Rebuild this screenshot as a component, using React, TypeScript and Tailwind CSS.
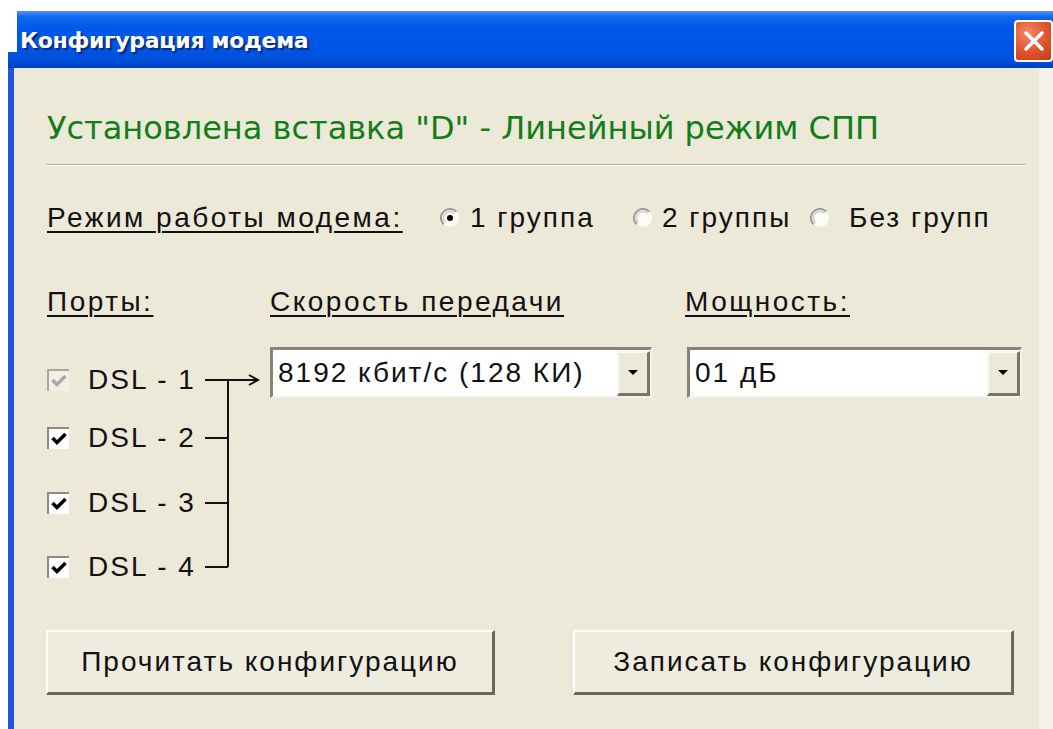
import React from 'react';

const sans = "font-['Liberation_Sans',Arial,sans-serif] text-[28px] tracking-[2px] text-[#111] leading-none";
const caption = "font-['Liberation_Sans',Arial,sans-serif] text-[28px] tracking-[2.5px] text-[#111] leading-none underline underline-offset-[4px] decoration-[2px]";

function Radio({ checked }: { checked?: boolean }) {
  return (
    <svg width="20" height="20" viewBox="0 0 20 20" className="shrink-0">
      <circle cx="10" cy="10" r="9" fill="#fbfbf8" />
      <path d="M3.6 16.4 A9 9 0 0 1 16.4 3.6" fill="none" stroke="#9d9b90" strokeWidth="2" />
      <path d="M5.4 14.6 A6.5 6.5 0 0 1 14.6 5.4" fill="none" stroke="#d4d1c4" strokeWidth="1.5" />
      {checked && <circle cx="10" cy="10" r="3" fill="#000" />}
    </svg>
  );
}

function Checkbox({ disabled }: { disabled?: boolean }) {
  return (
    <div
      className={
        disabled
          ? 'w-[22px] h-[22px] shrink-0 border-t-2 border-l-2 border-t-[#a8a699] border-l-[#a8a699] bg-[#f1efe6] flex items-center justify-center'
          : 'w-[22px] h-[22px] shrink-0 border-t-2 border-l-2 border-t-[#8c8a80] border-l-[#8c8a80] bg-white flex items-center justify-center'
      }
    >
      <svg width="16" height="14" viewBox="0 0 16 14">
        <path d="M1.5 6 L6 10.5 L14.5 2" fill="none" stroke={disabled ? '#a9a9a9' : '#000'} strokeWidth="3.5" />
      </svg>
    </div>
  );
}

function Combo({ value, className }: { value: string; className: string }) {
  return (
    <div className={`${className} h-[51px] bg-white border-t-[3px] border-l-[3px] border-t-[#85837a] border-l-[#85837a] border-b-2 border-r-2 border-b-[#f3f1e9] border-r-[#f3f1e9] flex items-center`}>
      <span className={`${sans} pl-[5px] flex-1 whitespace-nowrap`}>{value}</span>
      <div className="w-[33px] h-[45px] bg-[#ece9d8] border-t-2 border-l-2 border-t-[#fbfaf5] border-l-[#fbfaf5] border-b-[3px] border-r-[3px] border-b-[#77756c] border-r-[#77756c] flex items-center justify-center">
        <svg width="12" height="7" viewBox="0 0 12 7">
          <path d="M1 1 H11 L6 6 Z" fill="#000" />
        </svg>
      </div>
    </div>
  );
}

function Button({ label, className }: { label: string; className: string }) {
  return (
    <button className={`${className} h-[65px] bg-[#eeebdf] border-t-2 border-l-2 border-t-white border-l-white border-b-[3px] border-r-[3px] border-b-[#6a685f] border-r-[#6a685f] flex items-center justify-center`}>
      <span className={sans}>{label}</span>
    </button>
  );
}

const ports = [
  { name: 'DSL - 1', disabled: true, gap: '' },
  { name: 'DSL - 2', disabled: false, gap: 'mt-[18px]' },
  { name: 'DSL - 3', disabled: false, gap: 'mt-[25px]' },
  { name: 'DSL - 4', disabled: false, gap: 'mt-[24px]' },
];

export default function App() {
  return (
    <div className="w-[1053px] h-[729px] bg-white overflow-hidden pt-[11px] pl-[8px]">
      <div className="relative w-[1045px] h-[718px] flex flex-col">
        {/* title bar */}
        <div className="h-[57px] shrink-0 flex items-start bg-[linear-gradient(to_bottom,#4d96f8_0%,#1366f0_10%,#0058ea_30%,#0054e3_70%,#004fd8_88%,#0040bf_100%)]">
          <span className="ml-[12px] mt-[19px] font-['DejaVu_Sans',Verdana,sans-serif] font-bold text-[22px] tracking-[-0.3px] text-white leading-none [text-shadow:2px_2px_1px_#0a2a80]">
            Конфигурация модема
          </span>
          <div className="ml-auto mt-[9px] w-[39px] h-[42px] rounded-[4px] border-2 border-white bg-[radial-gradient(circle_at_35%_30%,#f08a6a_0%,#e0532c_55%,#c23d1a_100%)] flex items-center justify-center">
            <svg width="22" height="22" viewBox="0 0 22 22">
              <path d="M3 3 L19 19 M19 3 L3 19" stroke="#fff" strokeWidth="3.5" strokeLinecap="round" />
            </svg>
          </div>
        </div>
        <div className="absolute left-0 top-0 w-[9px] h-[41px] bg-white" />

        {/* dialog body */}
        <div className="flex-1 flex border-l-[6px] border-l-[#1d55e0]">
          <div className="flex-1 bg-[#ece9d8] pl-[33px] pt-[42px] flex flex-col">
            <div className="h-[36px] flex items-center font-['DejaVu_Sans',Verdana,sans-serif] text-[32px] text-[#137d17] whitespace-nowrap">
              Установлена вставка "D" - Линейный режим СПП
            </div>

            <div className="mt-[18px] w-[978px] h-[2px] border-t border-t-[#aca899] border-b border-b-white" />

            {/* modem mode */}
            <div className="mt-[37px] h-[30px] flex items-center">
              <div className="w-[393px]">
                <span className={caption}>Режим работы модема:</span>
              </div>
              <div className="w-[193px] flex items-center gap-[10px]">
                <Radio checked />
                <span className={sans}>1 группа</span>
              </div>
              <div className="w-[177px] flex items-center gap-[9px]">
                <Radio />
                <span className={sans}>2 группы</span>
              </div>
              <div className="flex items-center gap-[19px]">
                <Radio />
                <span className={sans}>Без групп</span>
              </div>
            </div>

            {/* column captions */}
            <div className="mt-[54px] h-[30px] flex items-center">
              <div className="w-[223px]">
                <span className={caption}>Порты:</span>
              </div>
              <div className="w-[415px]">
                <span className={caption}>Скорость передачи</span>
              </div>
              <span className={caption}>Мощность:</span>
            </div>

            {/* ports + selectors */}
            <div className="mt-[30px] flex items-start">
              <div className="w-[223px] mt-[13px] flex">
                <div className="w-[153px] flex flex-col">
                  {ports.map((p) => (
                    <div key={p.name} className={`${p.gap} h-[40px] flex items-center gap-[19px]`}>
                      <Checkbox disabled={p.disabled} />
                      <span className={`${sans} tracking-[1px]`}>{p.name}</span>
                    </div>
                  ))}
                </div>
                <svg width="70" height="227" viewBox="0 0 70 227" className="shrink-0">
                  <g stroke="#111" strokeWidth="2" fill="none">
                    <path d="M5 20 H58" />
                    <path d="M49 15 L58 20 L49 25" />
                    <path d="M28 20 V207" />
                    <path d="M5 78 H28" />
                    <path d="M5 143 H28" />
                    <path d="M5 207 H28" />
                  </g>
                </svg>
              </div>
              <Combo value="8192 кбит/с (128 КИ)" className="w-[382px]" />
              <Combo value="01 дБ" className="ml-[35px] w-[335px]" />
            </div>

            {/* actions */}
            <div className="mt-[43px] flex">
              <Button label="Прочитать конфигурацию" className="-ml-[1px] w-[449px]" />
              <Button label="Записать конфигурацию" className="ml-[78px] w-[441px]" />
            </div>
          </div>
          <div className="w-[14px] bg-[#f3f1e8]" />
        </div>
      </div>
    </div>
  );
}
